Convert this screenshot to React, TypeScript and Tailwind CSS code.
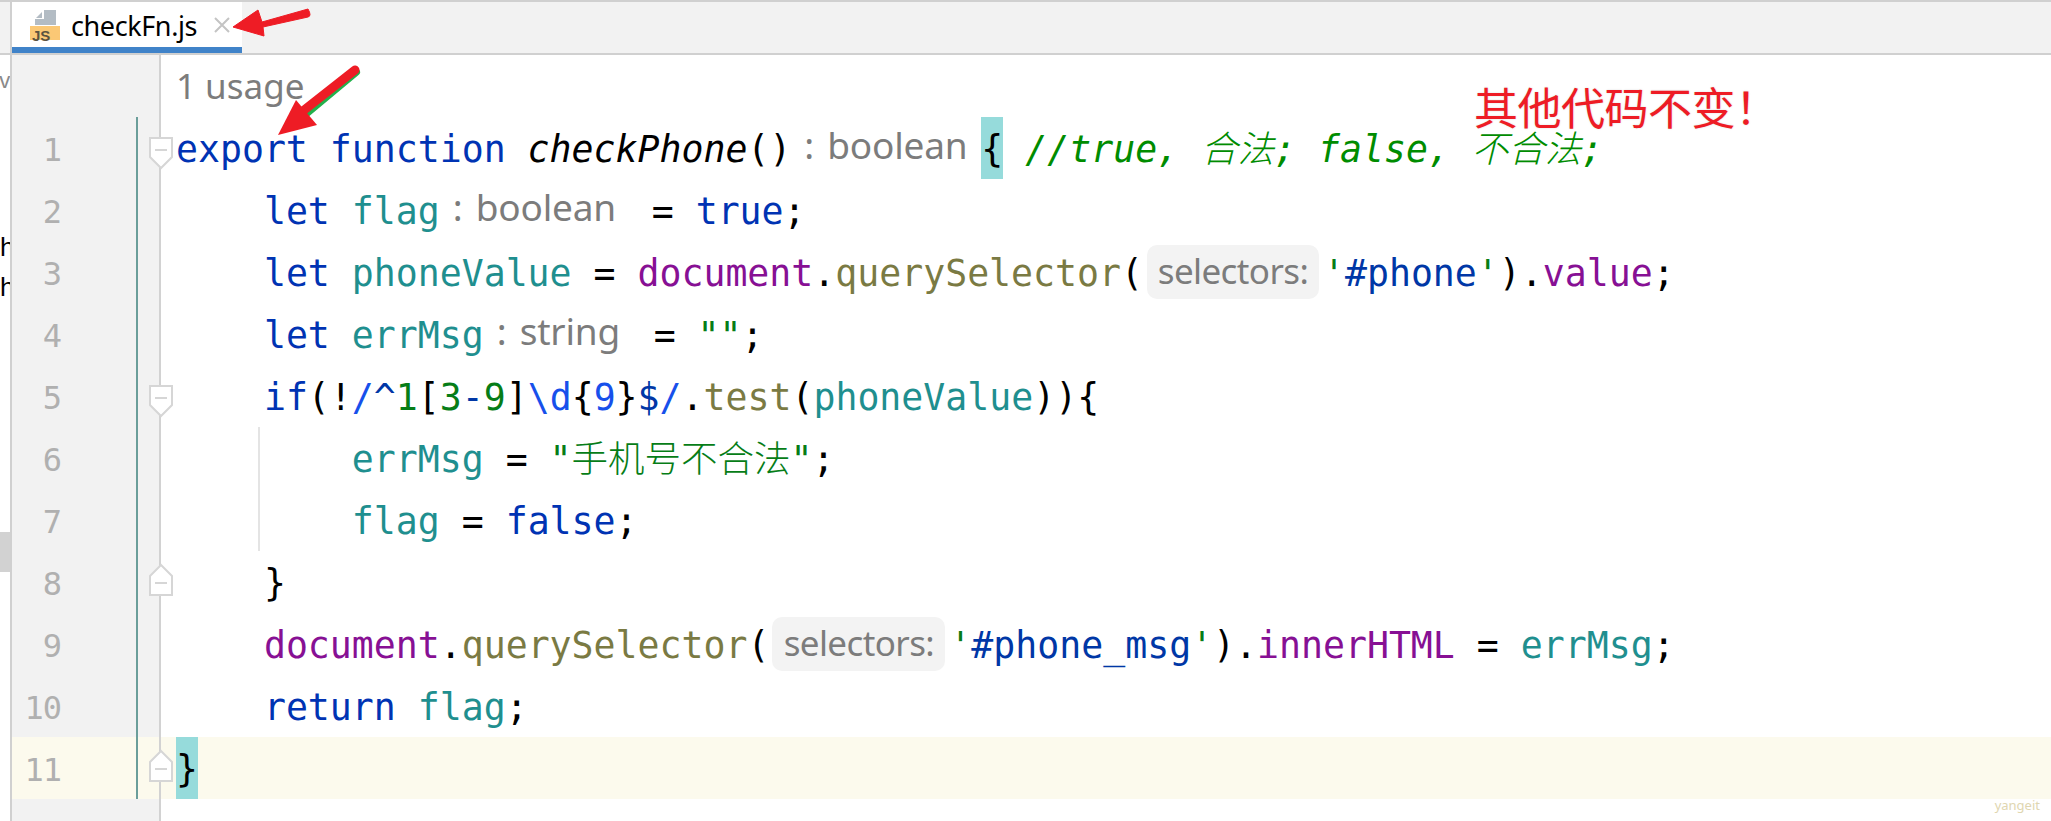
const kw = "text-[#0033b3]";
const vr = "text-[#1f8f8f]";
const doc = "text-[#871094]";
const fn = "text-[#7a7a43]";
const str = "text-[#067d17]";
const cm = "text-[#008c00] italic";
const rx = "text-[#1750eb]";
const rs = "text-[#0037a6]";
const gr = "text-[#067d17]";
const hl = "h-[62px] bg-[#96dbdb]";

function Hint({ label, type, width }: { label?: string; type: string; width: string }) {
  return (
    <span className={`inline-flex h-[62px] items-center self-center pb-[6px] font-['Noto_Sans',sans-serif] text-[37px] leading-[50px] tracking-[-0.2px] text-[#7c7c7c] ${width}`}>
      <span className="w-[36px] pl-[13px]">{label}</span>
      {type}
    </span>
  );
}

function Pill({ width }: { width: string }) {
  return (
    <span className={`mr-[4px] inline-flex h-[54px] items-center justify-center self-center rounded-[10px] bg-[#f3f3f3] pb-[3px] font-['Noto_Sans',sans-serif] text-[35px] leading-[46px] tracking-[-0.6px] text-[#7c7c7c] ${width}`}>
      selectors:
    </span>
  );
}

function Fold({ up, top }: { up?: boolean; top: string }) {
  return (
    <svg width="26" height="34" viewBox="0 0 26 34" className={`absolute left-[136px] ${top}`}>
      <path
        d={up ? "M2 32V13L13 2L24 13V32Z" : "M2 2H24V21L13 32L2 21Z"}
        fill="#fff"
        stroke="#d6d6d6"
        strokeWidth="2"
      />
      <path d={up ? "M7 20H19" : "M7 14H19"} stroke="#d6d6d6" strokeWidth="2" />
    </svg>
  );
}

function Row({
  n,
  active,
  guide,
  fold,
  children,
}: {
  n: number;
  active?: boolean;
  guide?: boolean;
  fold?: React.ReactNode;
  children: React.ReactNode;
}) {
  return (
    <div className={`relative flex h-[62px] ${active ? "bg-[#fcfaed]" : ""}`}>
      <div className={`flex w-[124px] shrink-0 items-center justify-end pr-[75px] pt-[3px] font-['DejaVu_Sans_Mono',monospace] text-[32px] tracking-[-1px] text-[#b0b0b0] ${active ? "" : "bg-[#f2f2f2]"}`}>
        {n}
      </div>
      <div className="w-[2px] shrink-0 bg-[#6b9e9a]" />
      <div className={`w-[21px] shrink-0 ${active ? "" : "bg-[#f2f2f2]"}`} />
      <div className="w-[2px] shrink-0 bg-[#d2d2d2]" />
      <div className="flex items-start whitespace-pre pl-[15px] font-['DejaVu_Sans_Mono','Noto_Sans_CJK_SC',monospace] text-[36.5px] leading-[65px] text-black">
        {children}
      </div>
      {guide && <div className="absolute left-[246px] top-0 h-[62px] w-[2px] bg-[#e4e4e4]" />}
      {fold}
    </div>
  );
}

function LeftStrip() {
  return (
    <div className="flex w-[10px] shrink-0 flex-col overflow-hidden whitespace-nowrap font-['Liberation_Sans',sans-serif]">
      <div className="mt-[14px] -ml-[13px] h-[24px] text-[22px] leading-[24px] text-[#8a8a8a]">av</div>
      <div className="mt-[134px] h-[40px] text-[26px] leading-[40px] text-black">h</div>
      <div className="h-[40px] text-[26px] leading-[40px] text-black">h</div>
      <div className="mt-[225px] h-[40px] w-full bg-[#d2d2d2]" />
    </div>
  );
}

function Annotations() {
  return (
    <>
      <svg width="140" height="150" viewBox="0 0 140 150" className="absolute left-[230px] top-0">
        <path d="M3 27L28 10L32 22L78 9Q82 16 78 17L33 27L34 36Z" fill="#ee1c25" stroke="#ee1c25" strokeLinejoin="round" />
        <path d="M126 72L66 122" stroke="#22b14c" strokeWidth="8" strokeLinecap="round" />
        <path d="M125 70L64 118" stroke="#ee1c25" strokeWidth="9" strokeLinecap="round" />
        <path d="M48 135L66 100L87 125Z" fill="#ee1c25" />
      </svg>
      <div className="absolute left-[1474px] top-[84px] font-['Noto_Sans_CJK_SC',sans-serif] text-[44px] leading-[44px] tracking-[-0.5px] text-[#ee1c25] [text-shadow:0_0_2px_#d8d8d8]">
        其他代码不变！
      </div>
      <div className="absolute right-[11px] top-[797px] font-['Noto_Sans',sans-serif] text-[13px] leading-[16px] text-[#e0d6b0]">
        yangeit
      </div>
    </>
  );
}

export default function App() {
  return (
    <div className="relative flex h-[821px] w-[2051px] flex-col overflow-hidden bg-white">
      {/* tab bar */}
      <div className="flex h-[55px] shrink-0 border-y-2 border-[#d0d0d0] bg-[#f2f2f2]">
        <div className="w-[10px] shrink-0" />
        <div className="w-[2px] shrink-0 bg-[#d0d0d0]" />
        <div className="relative flex h-[51px] w-[230px] items-center border-b-[6px] border-[#4083c9] bg-white pl-[18px]">
          <svg width="32" height="32" viewBox="0 0 32 32" className="shrink-0">
            <path d="M14 1H26V16H5V10H14Z" fill="#b3bcc4" />
            <path d="M12 3V9H6Z" fill="#b3bcc4" />
            <rect x="0" y="17" width="30" height="14" fill="#fbc875" />
          </svg>
          <span className="absolute left-[20px] top-[26px] font-['Liberation_Sans',sans-serif] text-[15px] font-bold leading-[15px] text-[#5c5340]">
            JS
          </span>
          <span className="ml-[9px] pt-[3px] font-['Noto_Sans',sans-serif] text-[27px] tracking-[-0.4px] text-black">
            checkFn.js
          </span>
          <svg width="16" height="16" viewBox="0 0 16 16" className="ml-[17px] shrink-0">
            <path d="M1 1L15 15M15 1L1 15" stroke="#c4c4c4" strokeWidth="2" />
          </svg>
        </div>
      </div>

      <div className="flex min-h-0 flex-1">
        <LeftStrip />
        <div className="w-[2px] shrink-0 bg-[#d0d0d0]" />
        <div className="relative flex-1">
          {/* usage lens */}
          <div className="relative flex h-[62px]">
            <div className="w-[147px] shrink-0 bg-[#f2f2f2]" />
            <div className="w-[2px] shrink-0 bg-[#d2d2d2]" />
            <div className="pl-[15px] pt-[7px] font-['Noto_Sans',sans-serif] text-[35px] leading-[48px] text-[#7c7c7c]">
              1 usage
            </div>
          </div>

          <Row n={1} fold={<Fold top="top-[19px]" />}>
            <span className={kw}>export function </span>
            <span className="italic">checkPhone</span>
            <span>()</span>
            <Hint label=":" type="boolean" width="w-[190px]" />
            <span className={hl}>{"{"}</span>
            <span className={cm}> //true, <span className="font-light">合法</span>; false, <span className="font-light">不合法</span>;</span>
          </Row>
          <Row n={2}>
            <span>    </span>
            <span className={kw}>let </span>
            <span className={vr}>flag</span>
            <Hint label=":" type="boolean" width="w-[190px]" />
            <span> = </span>
            <span className={kw}>true</span>
            <span>;</span>
          </Row>
          <Row n={3}>
            <span>    </span>
            <span className={kw}>let </span>
            <span className={vr}>phoneValue</span>
            <span> = </span>
            <span className={doc}>document</span>
            <span>.</span>
            <span className={fn}>querySelector</span>
            <span>(</span>
            <span className="ml-[4px]" />
            <Pill width="w-[172px]" />
            <span className={str}>'</span>
            <span className={rs}>#phone</span>
            <span className={str}>'</span>
            <span>)</span>
            <span>.</span>
            <span className={doc}>value</span>
            <span>;</span>
          </Row>
          <Row n={4}>
            <span>    </span>
            <span className={kw}>let </span>
            <span className={vr}>errMsg</span>
            <Hint label=":" type="string" width="w-[148px]" />
            <span> = </span>
            <span className={str}>""</span>
            <span>;</span>
          </Row>
          <Row n={5} fold={<Fold top="top-[19px]" />}>
            <span>    </span>
            <span className={kw}>if</span>
            <span>(!</span>
            <span className={rx}>/</span>
            <span className={rs}>^</span>
            <span className={gr}>1</span>
            <span>[</span>
            <span className={gr}>3</span>
            <span className={rs}>-</span>
            <span className={gr}>9</span>
            <span>]</span>
            <span className={rx}>\d</span>
            <span>{"{"}</span>
            <span className={rx}>9</span>
            <span>{"}"}</span>
            <span className={rs}>$</span>
            <span className={rx}>/</span>
            <span>.</span>
            <span className={fn}>test</span>
            <span>(</span>
            <span className={vr}>phoneValue</span>
            <span>)){"{"}</span>
          </Row>
          <Row n={6} guide>
            <span>        </span>
            <span className={vr}>errMsg</span>
            <span> = </span>
            <span className={str}>"<span className="font-light">手机号不合法</span>"</span>
            <span>;</span>
          </Row>
          <Row n={7} guide>
            <span>        </span>
            <span className={vr}>flag</span>
            <span> = </span>
            <span className={kw}>false</span>
            <span>;</span>
          </Row>
          <Row n={8} fold={<Fold up top="top-[12px]" />}>
            <span>    {"}"}</span>
          </Row>
          <Row n={9}>
            <span>    </span>
            <span className={doc}>document</span>
            <span>.</span>
            <span className={fn}>querySelector</span>
            <span>(</span>
            <span className="ml-[3px]" />
            <Pill width="w-[173px]" />
            <span className={str}>'</span>
            <span className={rs}>#phone_msg</span>
            <span className={str}>'</span>
            <span>).</span>
            <span className={doc}>innerHTML</span>
            <span> = </span>
            <span className={vr}>errMsg</span>
            <span>;</span>
          </Row>
          <Row n={10}>
            <span>    </span>
            <span className={kw}>return </span>
            <span className={vr}>flag</span>
            <span>;</span>
          </Row>
          <Row n={11} active fold={<Fold up top="top-[12px]" />}>
            <span className={hl}>{"}"}</span>
          </Row>

          <div className="flex h-[22px]">
            <div className="w-[147px] shrink-0 bg-[#f2f2f2]" />
            <div className="w-[2px] shrink-0 bg-[#d2d2d2]" />
          </div>
        </div>
      </div>
      <Annotations />
    </div>
  );
}
